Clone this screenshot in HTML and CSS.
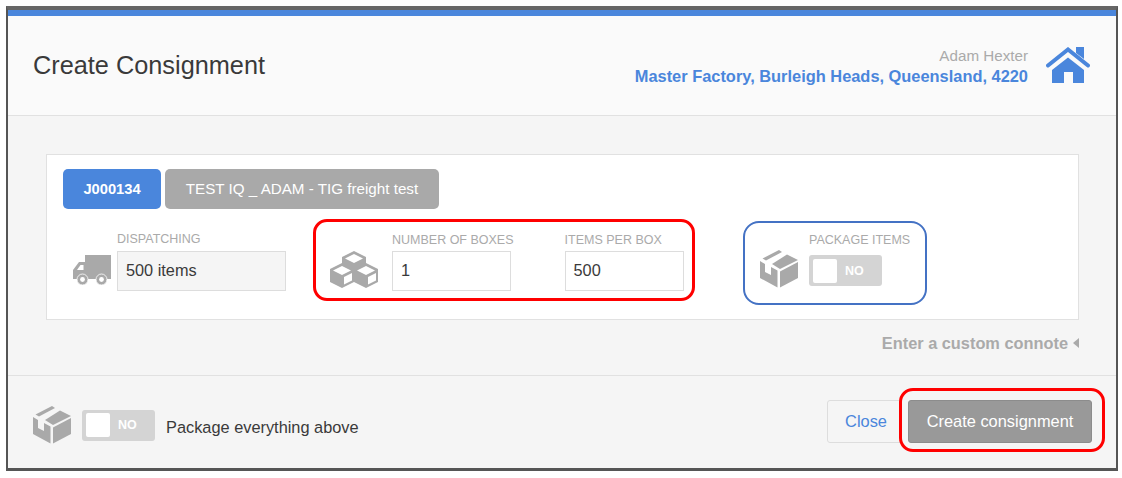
FILE: index.html
```html
<!DOCTYPE html>
<html lang="en">
<head>
<meta charset="utf-8">
<title>Create Consignment</title>
<link rel="stylesheet" href="styles.css">
</head>
<body>
<svg class="defs" width="0" height="0" aria-hidden="true">
  <symbol id="pkg" viewBox="0 0 38 38">
    <path d="M2.5 8.5 19 0 22 2 6 10.5Z" fill="#a9a9a9"/>
    <path d="M0 11 5 14V22L11 25V17L17.5 20.5V37.5L0 28Z" fill="#a9a9a9"/>
    <path d="M12 14 27 4.5 38 10 20 19Z" fill="#a9a9a9"/>
    <path d="M20 21.5 38 12V28L20 37.5Z" fill="#a9a9a9"/>
  </symbol>
</svg>
<main class="modal">
  <header class="head">
    <h1 class="title">Create Consignment</h1>
    <div class="who">
      <div class="who-text">
        <div class="who-name">Adam Hexter</div>
        <a class="who-place">Master Factory, Burleigh Heads, Queensland, 4220</a>
      </div>
      <svg class="home" width="44" height="36" viewBox="0 0 44 36">
        <path d="M30 0H38V12L30 6Z M6 23 22 10.5 38 23V36H27V25H18V36H6Z" fill="#4a86dc"/>
        <path d="M2 18.5 22 2.5 42 18.5" fill="none" stroke="#4a86dc" stroke-width="4" stroke-linecap="round"/>
      </svg>
    </div>
  </header>
  <section class="body">
    <div class="panel">
      <div class="tabs">
        <span class="tab tab-blue">J000134</span>
        <span class="tab tab-grey">TEST IQ _ ADAM - TIG freight test</span>
      </div>
      <div class="fields">
        <div class="group group-dispatch">
          <svg class="icon-truck" width="38" height="30" viewBox="0 0 38 30">
            <path d="M12 0H38V24H12ZM0 24V15L6 7H12V24Z" fill="#a9a9a9"/>
            <path d="M4 15 7.5 10H10.5V15Z" fill="#fff"/>
            <circle cx="9.5" cy="24.5" r="5.5" fill="#a9a9a9" stroke="#fff" stroke-width="0.8"/>
            <circle cx="28.5" cy="24.5" r="5.5" fill="#a9a9a9" stroke="#fff" stroke-width="0.8"/>
            <circle cx="9.5" cy="24.5" r="2.4" fill="#fff"/>
            <circle cx="28.5" cy="24.5" r="2.4" fill="#fff"/>
          </svg>
          <label class="field">
            <span class="caption">DISPATCHING</span>
            <span class="value value-wide">500 items</span>
          </label>
        </div>
        <div class="group group-red">
          <svg class="icon-cubes" width="48" height="37" viewBox="0 0 48 37">
            <g fill="#a9a9a9">
              <path d="M24 0 36 6V18L24 24 12 18V6Z"/>
              <path d="M12 12 24 18V31L12 37 0 31V18Z"/>
              <path d="M36 12 48 18V31L36 37 24 31V18Z"/>
            </g>
            <g fill="#fff">
              <path d="M24 3 33 7.5 24 12 15 7.5Z"/>
              <path d="M12 15 21 19.5 12 24 3 19.5Z"/>
              <path d="M36 15 45 19.5 36 24 27 19.5Z"/>
              <path d="M22 22 14 26V33.5L22 29.5Z"/>
              <path d="M46 22 38 26V33.5L46 29.5Z"/>
            </g>
          </svg>
          <label class="field field-boxes">
            <span class="caption caption-red">NUMBER OF BOXES</span>
            <span class="value value-input">1</span>
          </label>
          <label class="field">
            <span class="caption caption-red">ITEMS PER BOX</span>
            <span class="value value-input">500</span>
          </label>
        </div>
        <div class="group group-blue">
          <svg class="icon-pkg" width="38" height="38"><use href="#pkg"/></svg>
          <div class="field">
            <span class="caption caption-pack">PACKAGE ITEMS</span>
            <span class="toggle"><span class="knob"></span><b class="toggle-no">NO</b></span>
          </div>
        </div>
      </div>
    </div>
    <div class="connote">Enter a custom connote<span class="caret"></span></div>
  </section>
  <footer class="foot">
    <div class="foot-left">
      <svg class="icon-pkg" width="38" height="38"><use href="#pkg"/></svg>
      <span class="toggle"><span class="knob"></span><b class="toggle-no">NO</b></span>
      <span class="foot-label">Package everything above</span>
    </div>
    <div class="foot-right">
      <button class="btn btn-close">Close</button>
      <div class="btn-ring"><button class="btn btn-create">Create consignment</button></div>
    </div>
  </footer>
</main>
</body>
</html>
```
FILE: styles.css
```css
* { box-sizing: border-box; }
html, body { margin: 0; height: 478px; background: #fff; overflow: hidden; }
body { font-family: "Liberation Sans", Arial, sans-serif; color: #333; padding: 6px 4px 7px 6px; }
.defs { position: absolute; }
.modal {
  height: 465px;
  display: flex;
  flex-direction: column;
  border: 2px solid #555;
  border-top: 4px solid #666;
  border-bottom-width: 3px;
  background: #f5f5f5;
}
.head {
  height: 106px;
  flex: none;
  background: #fafafa;
  border-top: 6px solid #4a86dc;
  border-bottom: 1px solid #e1e1e1;
  display: flex;
  justify-content: space-between;
  padding: 0 26px 0 25px;
}
.title { margin: 34px 0 0; font-size: 25.3px; line-height: 30px; font-weight: 400; color: #3a3a3a; }
.who { display: flex; align-items: flex-start; padding-top: 31px; gap: 18px; }
.who-text { text-align: right; }
.who-name { font-size: 15.2px; line-height: 18px; color: #aaa; }
.who-place { display: block; font-size: 16.4px; line-height: 22px; font-weight: 700; color: #4a86dc; }
.home { display: block; }
.body { height: 260px; flex: none; padding: 38px 37px 0 38px; border-bottom: 1px solid #e1e1e1; }
.panel { height: 166px; background: #fff; border: 1px solid #e1e1e1; padding: 14px 16px 0; }
.tabs { display: flex; gap: 4px; }
.tab { height: 40px; border-radius: 5px; color: #fff; font-size: 15.2px; line-height: 40px; text-align: center; }
.tab-blue { width: 98px; background: #4a86dc; font-size: 14.7px; font-weight: 700; }
.tab-grey { width: 274px; background: #a9a9a9; }
.fields { display: flex; align-items: flex-start; margin-top: 10px; }
.group { display: flex; align-items: flex-end; }
.group-dispatch { margin: 13px 0 0 10px; width: 240px; }
.icon-truck { display: block; margin: 0 6px 6px 0; flex: none; }
.field { display: flex; flex-direction: column; }
.caption { font-size: 12.5px; line-height: 14px; color: #aaa; margin-bottom: 5px; white-space: nowrap; }
.caption-red { margin-bottom: 4px; }
.value { display: block; height: 40px; border: 1px solid #ddd; font-size: 16.3px; line-height: 36px; padding-left: 8px; color: #3a3a3a; }
.value-wide { width: 169px; background: #f5f5f5; }
.value-input { width: 119px; background: #fff; }
.group-red {
  width: 382px;
  height: 82px;
  border: 3px solid #f00;
  border-radius: 14px;
  padding: 0 0 7px 14px;
}
.icon-cubes { display: block; margin: 0 14px 3px 0; flex: none; }
.field-boxes { margin-right: 51px; }
.group-blue {
  width: 184px;
  height: 84px;
  border: 2.5px solid #4472c4;
  border-radius: 16px;
  padding: 0 0 17px 15px;
  margin: 2px 0 0 48px;
}
.icon-pkg { display: block; flex: none; }
.group-blue .icon-pkg { margin: 0 11px -2px 0; }
.caption-pack { margin-bottom: 8px; }
.toggle {
  width: 73px; height: 31px; display: flex; align-items: center;
  background: #d4d4d4; border-radius: 3px; padding: 3px 4px; flex: none;
}
.knob { width: 24px; height: 24px; background: #fff; border-radius: 2px; }
.toggle-no { color: #fff; font-size: 12.5px; margin-left: 8px; }
.connote {
  display: flex; align-items: center; justify-content: flex-end; margin-top: 14px;
  color: #aaa; font-size: 16.35px; font-weight: 700; line-height: 18px;
}
.caret { margin-left: 5px; border: 5px solid transparent; border-right: 6px solid #aaa; border-left: 0; }
.foot { flex: 1; display: flex; justify-content: space-between; align-items: flex-start; padding: 0 11px 0 25px; }
.foot-left { display: flex; align-items: center; margin-top: 30px; }
.foot-left .icon-pkg { margin-right: 11px; }
.foot-label { margin: 4px 0 0 11px; font-size: 16.35px; color: #3a3a3a; }
.foot-right { display: flex; align-items: flex-start; margin-top: 12px; }
.btn { height: 43px; border-radius: 3px; font-family: inherit; font-size: 16.4px; padding: 0; }
.btn-close { width: 78px; margin-top: 12px; background: #f5f5f5; border: 1px solid #ddd; color: #4a86dc; }
.btn-ring { border: 3px solid #f00; border-radius: 14px; padding: 9px 10px 6px 6px; margin-left: -6px; background: #f5f5f5; position: relative; }
.btn-create { display: block; width: 184px; background: #999; border: 1px solid #8c8c8c; color: #fff; }
```
